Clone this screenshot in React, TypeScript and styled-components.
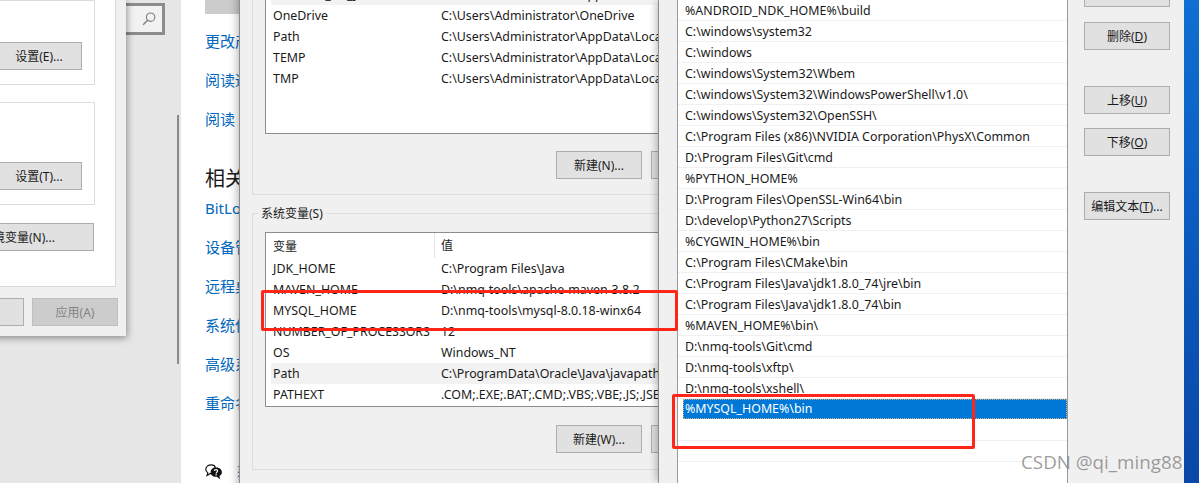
import React from 'react';
import styled, { createGlobalStyle } from 'styled-components';

const uiFont = `"Noto Sans", "Noto Sans CJK SC", sans-serif`;

const GlobalStyle = createGlobalStyle`
  html, body {
    margin: 0;
    padding: 0;
    background: #e6e6e6;
  }
  * {
    box-sizing: border-box;
  }
`;

const Desktop = styled.div`
  position: relative;
  width: 1199px;
  height: 483px;
  overflow: hidden;
  font-family: ${uiFont};
  font-size: 12px;
  color: #1a1a1a;
`;

const Wallpaper = styled.div`
  position: absolute;
  left: 1184px;
  top: 0;
  width: 15px;
  height: 483px;
  background: linear-gradient(180deg, #0f6fd2 0%, #0b5cc0 45%, #0a47a8 100%);
`;

/* settings page behind the dialogs */
const SideBar = styled.div`
  position: absolute;
  left: 0;
  top: 0;
  width: 181px;
  height: 483px;
  padding: 3px 0 0 60px;
  background: #e6e6e6;
`;

const SearchBox = styled.div`
  display: flex;
  align-items: center;
  justify-content: flex-end;
  width: 105px;
  height: 32px;
  padding-right: 6px;
  border: 3px solid #8c8c8c;
  background: #f2f2f2;
`;

const ScrollThumb = styled.div`
  position: absolute;
  left: 177px;
  top: 115px;
  width: 2px;
  height: 249px;
  background: #8a8a8a;
`;

const SettingsPage = styled.div`
  position: absolute;
  left: 181px;
  top: 0;
  width: 80px;
  height: 483px;
  padding-left: 24px;
  background: #fff;
  white-space: nowrap;
  overflow: hidden;
`;

const GrayButton = styled.div`
  width: 60px;
  height: 14px;
  margin-bottom: 17px;
  background: #cccccc;
`;

const LinkGroup = styled.div`
  display: flex;
  flex-direction: column;
  gap: 19px;
`;

const PageLink = styled.div`
  height: 20px;
  line-height: 20px;
  font-size: 15px;
  color: #0067c0;
`;

const SectionTitle = styled.div`
  height: 30px;
  margin: 35px 0 4px;
  line-height: 30px;
  font-size: 20px;
  color: #1a1a1a;
`;

const HelpRow = styled.div`
  display: flex;
  align-items: center;
  gap: 15px;
  height: 20px;
  margin-top: 49px;

  svg {
    flex: none;
  }
`;

/* system properties dialog, left */
const PropsWindow = styled.div`
  position: absolute;
  left: -300px;
  top: 0;
  width: 426px;
  height: 336px;
  padding-right: 10px;
  background: #f0f0f0;
  box-shadow: 1px 2px 7px rgba(0, 0, 0, 0.4);
`;

const PropsPanel = styled.div`
  display: flex;
  flex-direction: column;
  align-items: stretch;
  height: 287px;
  padding-right: 20px;
  background: #fff;
  border: 1px solid #d9d9d9;
  border-top: none;
`;

const PropsBox = styled.div<{ $height: number; $top: number }>`
  display: flex;
  align-items: flex-end;
  justify-content: flex-end;
  height: ${(p) => p.$height}px;
  margin-top: ${(p) => p.$top}px;
  padding: 0 12px 14px 0;
  border: 1px solid #dcdcdc;
`;

const Button = styled.div<{ $width?: number; $top?: number; $disabled?: boolean }>`
  display: flex;
  align-items: center;
  justify-content: center;
  flex: none;
  width: ${(p) => p.$width ?? 86}px;
  height: 28px;
  margin-top: ${(p) => p.$top ?? 0}px;
  border: 1px solid ${(p) => (p.$disabled ? '#bfbfbf' : '#adadad')};
  background: ${(p) => (p.$disabled ? '#cccccc' : '#e1e1e1')};
  color: ${(p) => (p.$disabled ? '#838383' : '#1a1a1a')};
  white-space: nowrap;
`;

const EnvButton = styled(Button)`
  align-self: flex-end;
  margin-right: 1px;
`;

const PropsFooter = styled.div`
  display: flex;
  justify-content: flex-end;
  gap: 8px;
  margin-top: 11px;
  margin-right: -2px;
`;

/* environment variables dialog, middle */
const EnvWindow = styled.div`
  position: absolute;
  left: 239px;
  top: -25px;
  width: 560px;
  height: 520px;
  padding-left: 12px;
  background: #f0f0f0;
  border-left: 1px solid #8c8c8c;
  box-shadow: -1px 0 9px rgba(0, 0, 0, 0.32);
`;

const GroupBox = styled.div<{ $height: number; $top: number }>`
  position: relative;
  height: ${(p) => p.$height}px;
  margin-top: ${(p) => p.$top}px;
  padding-left: 12px;
  border: 1px solid #dcdcdc;
  border-right: none;
`;

const GroupLabel = styled.span`
  position: absolute;
  left: 5px;
  top: -9px;
  padding: 0 3px;
  background: #f0f0f0;
  line-height: 17px;
`;

const VarList = styled.div<{ $height: number; $top: number; $pad: number }>`
  width: 520px;
  height: ${(p) => p.$height}px;
  margin-top: ${(p) => p.$top}px;
  padding: ${(p) => p.$pad}px 0 0 5px;
  background: #fff;
  border: 1px solid #8c8c8c;
  overflow: hidden;
`;

const VarRow = styled.div<{ $hover?: boolean }>`
  display: grid;
  grid-template-columns: 168px 1fr;
  align-items: center;
  height: 21px;
  padding-left: 2px;
  font-size: 12.4px;
  background: ${(p) => (p.$hover ? '#f2f2f2' : 'transparent')};
  white-space: nowrap;
`;

const VarHeader = styled.div`
  display: grid;
  grid-template-columns: 161px 1fr;
  align-items: center;
  height: 25px;
  padding-left: 2px;
`;

const HeaderValue = styled.span`
  height: 25px;
  padding-left: 6px;
  line-height: 25px;
  border-left: 1px solid #e5e5e5;
`;

const ButtonRow = styled.div<{ $top: number }>`
  display: flex;
  gap: 9px;
  margin-top: ${(p) => p.$top}px;
  padding-left: 291px;
`;

/* edit path dialog, right */
const PathWindow = styled.div`
  position: absolute;
  left: 658px;
  top: 0;
  display: flex;
  width: 526px;
  height: 483px;
  padding-left: 18px;
  background: #f0f0f0;
  border-left: 1px solid #8c8c8c;
  box-shadow: -4px 0 7px -2px rgba(0, 0, 0, 0.25);
`;

const PathList = styled.div`
  width: 391px;
  height: 483px;
  background: #fff;
  border-left: 1px solid #999;
  border-right: 1px solid #999;
`;

const PathRow = styled.div`
  height: 21px;
  padding-left: 7px;
  font-size: 12.4px;
  line-height: 21px;
  border-bottom: 1px solid #f0f0f0;
  white-space: nowrap;
`;

const SelectedRow = styled.div`
  height: 20px;
  margin: 0 0 1px 5px;
  padding-left: 2px;
  font-size: 12.4px;
  line-height: 20px;
  background: #0078d7;
  color: #fff;
  outline: 1px dotted rgba(255, 190, 110, 0.8);
  outline-offset: -1px;
`;

const ButtonColumn = styled.div`
  display: flex;
  flex-direction: column;
  margin: -21px 0 0 16px;
`;

const RedFrame = styled.div<{ $x: number; $y: number; $w: number; $h: number }>`
  position: absolute;
  left: ${(p) => p.$x}px;
  top: ${(p) => p.$y}px;
  width: ${(p) => p.$w}px;
  height: ${(p) => p.$h}px;
  border: 3px solid #ff2618;
  border-radius: 2px;
`;

const Watermark = styled.div`
  position: absolute;
  left: 1021px;
  top: 450px;
  font-family: "Open Sans", sans-serif;
  font-size: 18.8px;
  line-height: 25px;
  color: rgba(125, 125, 125, 0.75);
  white-space: nowrap;
`;

const SearchIcon = () => (
  <svg width="14" height="14" viewBox="0 0 14 14" fill="none" stroke="#7a7a7a">
    <circle cx="8.6" cy="5.2" r="4.2" strokeWidth="1.1" />
    <path d="M5.6 8.2 1.2 12.8" strokeWidth="1.3" />
  </svg>
);

const HelpIcon = () => (
  <svg width="17" height="16" viewBox="0 0 17 16">
    <path
      d="M6.5 0.8C3 0.8 0.8 2.8 0.8 5.3c0 1.5.8 2.7 2 3.5L2 11.5l3-1.8h2.2l3-6.5C9.8 1.6 8.4.8 6.5.8Z"
      fill="#fff"
      stroke="#111"
      strokeWidth="1.2"
    />
    <path d="M10.8 3.6c-3 0-5.2 2-5.2 4.6 0 2.6 2.2 4.6 5.2 4.6h1l3.4 2.4-.8-3.3c1.6-.8 2.5-2.1 2.5-3.7 0-2.6-2.6-4.6-6.1-4.6Z" fill="#111" />
    <path d="M9.2 6.9c.2-.9.9-1.3 1.8-1.3s1.6.5 1.6 1.3c0 1.2-1.5 1.2-1.5 2.6" fill="none" stroke="#fff" strokeWidth="1.2" />
    <rect x="10.5" y="10.2" width="1.3" height="1.3" fill="#fff" />
  </svg>
);

const userVars = [
  ['NUMBER_OF_JOBS', 'C:\\Users\\Administrator\\AppData\\Local\\Temp'],
  ['OneDrive', 'C:\\Users\\Administrator\\OneDrive'],
  ['Path', 'C:\\Users\\Administrator\\AppData\\Local\\Microsoft'],
  ['TEMP', 'C:\\Users\\Administrator\\AppData\\Local\\Temp'],
  ['TMP', 'C:\\Users\\Administrator\\AppData\\Local\\Temp'],
];

const systemVars = [
  ['JDK_HOME', 'C:\\Program Files\\Java'],
  ['MAVEN_HOME', 'D:\\nmq-tools\\apache-maven-3.8.2'],
  ['MYSQL_HOME', 'D:\\nmq-tools\\mysql-8.0.18-winx64'],
  ['NUMBER_OF_PROCESSORS', '12'],
  ['OS', 'Windows_NT'],
  ['Path', 'C:\\ProgramData\\Oracle\\Java\\javapath;C:\\Program'],
  ['PATHEXT', '.COM;.EXE;.BAT;.CMD;.VBS;.VBE;.JS;.JSE;.WSF'],
];

const paths = [
  '%ANDROID_NDK_HOME%\\build',
  'C:\\windows\\system32',
  'C:\\windows',
  'C:\\windows\\System32\\Wbem',
  'C:\\windows\\System32\\WindowsPowerShell\\v1.0\\',
  'C:\\windows\\System32\\OpenSSH\\',
  'C:\\Program Files (x86)\\NVIDIA Corporation\\PhysX\\Common',
  'D:\\Program Files\\Git\\cmd',
  '%PYTHON_HOME%',
  'D:\\Program Files\\OpenSSL-Win64\\bin',
  'D:\\develop\\Python27\\Scripts',
  '%CYGWIN_HOME%\\bin',
  'C:\\Program Files\\CMake\\bin',
  'C:\\Program Files\\Java\\jdk1.8.0_74\\jre\\bin',
  'C:\\Program Files\\Java\\jdk1.8.0_74\\bin',
  '%MAVEN_HOME%\\bin\\',
  'D:\\nmq-tools\\Git\\cmd',
  'D:\\nmq-tools\\xftp\\',
  'D:\\nmq-tools\\xshell\\',
];

const App: React.FC = () => (
  <Desktop>
    <GlobalStyle />
    <Wallpaper />

    <SideBar>
      <SearchBox>
        <SearchIcon />
      </SearchBox>
      <ScrollThumb />
    </SideBar>

    <SettingsPage>
      <GrayButton />
      <LinkGroup>
        <PageLink>更改产品密钥</PageLink>
        <PageLink>阅读适用于</PageLink>
        <PageLink>阅读 Microsoft</PageLink>
      </LinkGroup>
      <SectionTitle>相关设置</SectionTitle>
      <LinkGroup>
        <PageLink>BitLocker 设置</PageLink>
        <PageLink>设备管理器</PageLink>
        <PageLink>远程桌面</PageLink>
        <PageLink>系统保护</PageLink>
        <PageLink>高级系统设置</PageLink>
        <PageLink>重命名这台电脑</PageLink>
      </LinkGroup>
      <HelpRow>
        <HelpIcon />
        <PageLink>获取帮助</PageLink>
      </HelpRow>
    </SettingsPage>

    <PropsWindow>
      <PropsPanel>
        <PropsBox $height={85} $top={0}>
          <Button>设置(E)...</Button>
        </PropsBox>
        <PropsBox $height={103} $top={17}>
          <Button>设置(T)...</Button>
        </PropsBox>
        <EnvButton $width={152} $top={18}>
          环境变量(N)...
        </EnvButton>
      </PropsPanel>
      <PropsFooter>
        <Button>取消</Button>
        <Button $disabled>应用(A)</Button>
      </PropsFooter>
    </PropsWindow>

    <EnvWindow>
      <GroupBox $height={220} $top={0}>
        <VarList $height={158} $top={0} $pad={7}>
          {userVars.map(([name, value], i) => (
            <VarRow key={name} $hover={i === 0}>
              <span>{name}</span>
              <span>{value}</span>
            </VarRow>
          ))}
        </VarList>
        <ButtonRow $top={17}>
          <Button>新建(N)...</Button>
          <Button>编辑(E)...</Button>
        </ButtonRow>
      </GroupBox>
      <GroupBox $height={257} $top={18}>
        <GroupLabel>系统变量(S)</GroupLabel>
        <VarList $height={175} $top={18} $pad={0}>
          <VarHeader>
            <span>变量</span>
            <HeaderValue>值</HeaderValue>
          </VarHeader>
          {systemVars.map(([name, value]) => (
            <VarRow key={name} $hover={name === 'Path'}>
              <span>{name}</span>
              <span>{value}</span>
            </VarRow>
          ))}
        </VarList>
        <ButtonRow $top={18}>
          <Button>新建(W)...</Button>
          <Button>编辑(I)...</Button>
        </ButtonRow>
      </GroupBox>
    </EnvWindow>

    <PathWindow>
      <PathList>
        {paths.map((path) => (
          <PathRow key={path}>{path}</PathRow>
        ))}
        <SelectedRow>%MYSQL_HOME%\bin</SelectedRow>
        <PathRow />
        <PathRow />
      </PathList>
      <ButtonColumn>
        <Button>编辑(E)...</Button>
        <Button $top={15}>
          删除(<u>D</u>)
        </Button>
        <Button $top={36}>
          上移(<u>U</u>)
        </Button>
        <Button $top={14}>
          下移(<u>O</u>)
        </Button>
        <Button $top={36}>
          编辑文本(<u>T</u>)...
        </Button>
      </ButtonColumn>
    </PathWindow>

    <RedFrame $x={261} $y={290} $w={417} $h={41} />
    <RedFrame $x={672} $y={394} $w={303} $h={55} />
    <Watermark>CSDN @qi_ming88</Watermark>
  </Desktop>
);

export default App;
